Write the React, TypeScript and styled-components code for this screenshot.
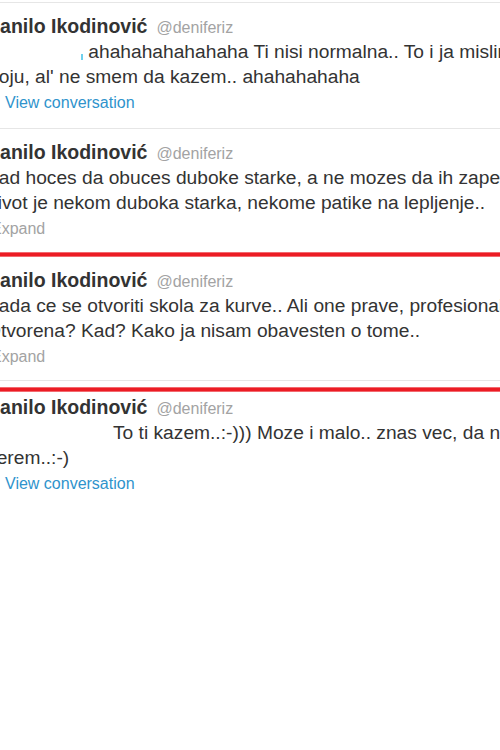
import React from "react";
import styled, { createGlobalStyle } from "styled-components";

type Tweet = {
  lead?: number;
  mark?: boolean;
  lines: string[];
  footer: "conversation" | "expand";
};

const tweets: Tweet[] = [
  {
    lead: 97,
    mark: true,
    lines: [
      " ahahahahahahaha Ti nisi normalna.. To i ja mislim",
      "Koju, al' ne smem da kazem.. ahahahahaha",
    ],
    footer: "conversation",
  },
  {
    lines: [
      "Kad hoces da obuces duboke starke, a ne mozes da ih zapertlas..",
      "Zivot je nekom duboka starka, nekome patike na lepljenje..",
    ],
    footer: "expand",
  },
  {
    lines: [
      "Kada ce se otvoriti skola za kurve.. Ali one prave, profesionalne..",
      "Otvorena? Kad? Kako ja nisam obavesten o tome..",
    ],
    footer: "expand",
  },
  {
    lead: 127,
    lines: [
      "To ti kazem..:-))) Moze i malo.. znas vec, da ne",
      "perem..:-)",
    ],
    footer: "conversation",
  },
];

const App = () => {
  const renderTweet = (t: Tweet, i: number, pad: [number, number], border: boolean) => (
    <TweetItem key={i} $top={pad[0]} $bottom={pad[1]} $border={border}>
      <NameRow>
        <FullName>Danilo Ikodinović</FullName>
        <ScreenName>@deniferiz</ScreenName>
      </NameRow>
      <Text>
        {t.lines.map((line, j) => (
          <Line key={j}>
            {j === 0 && t.lead ? <Lead $w={t.lead}>{t.mark && <Mark />}</Lead> : null}
            {line}
          </Line>
        ))}
      </Text>
      {t.footer === "conversation" ? (
        <Conversation>View conversation</Conversation>
      ) : (
        <Expand>Expand</Expand>
      )}
    </TweetItem>
  );

  return (
    <>
      <GlobalStyle />
      <Page>
        <Stream>
          {renderTweet(tweets[0], 0, [11, 14], true)}
          {renderTweet(tweets[1], 1, [11, 12], false)}
          <RedRule $gap={0} />
          {renderTweet(tweets[2], 2, [11, 12], true)}
          <RedRule $gap={6} />
          {renderTweet(tweets[3], 3, [3, 12], false)}
        </Stream>
      </Page>
    </>
  );
};

const GlobalStyle = createGlobalStyle`
  html, body {
    margin: 0;
    padding: 0;
    background: #ffffff;
    overflow: hidden;
  }
  body {
    font-family: "Liberation Sans", Arial, sans-serif;
  }
`;

const Page = styled.div`
  width: 500px;
  height: 750px;
  overflow: hidden;
  background: #ffffff;
`;

const Stream = styled.div`
  margin-top: 2px;
  margin-left: -14px;
  width: 700px;
  border-top: 1px solid #e6e6e6;
`;

const TweetItem = styled.div<{ $top: number; $bottom: number; $border: boolean }>`
  padding: ${(p) => p.$top}px 0 ${(p) => p.$bottom}px;
  border-bottom: ${(p) => (p.$border ? "1px solid #e6e6e6" : "none")};
`;

const NameRow = styled.div`
  display: flex;
  align-items: baseline;
  height: 25px;
  line-height: 25px;
  white-space: nowrap;
`;

const FullName = styled.strong`
  font-size: 19.5px;
  font-weight: 700;
  color: #333333;
`;

const ScreenName = styled.span`
  margin-left: 9px;
  font-size: 16px;
  color: #a3a3a3;
`;

const Text = styled.div`
  font-size: 19.2px;
  line-height: 25px;
  color: #333333;
`;

const Line = styled.div`
  white-space: pre;
`;

const Lead = styled.span<{ $w: number }>`
  display: inline-block;
  position: relative;
  width: ${(p) => p.$w}px;
  height: 1px;
`;

const Mark = styled.span`
  position: absolute;
  right: 0;
  bottom: -2px;
  width: 2px;
  height: 6px;
  background: #6fd0ec;
`;

const Footer = styled.div`
  margin-top: 3px;
  height: 22px;
  line-height: 22px;
  font-size: 16px;
  white-space: nowrap;
`;

const Conversation = styled(Footer)`
  padding-left: 19px;
  color: #2f93cc;
`;

const Expand = styled(Footer)`
  padding-left: 5px;
  color: #a3a3a3;
`;

const RedRule = styled.div<{ $gap: number }>`
  margin-top: ${(p) => p.$gap}px;
  height: 3px;
  background: #ec1c24;
  border-top: 1px solid #f26a70;
  border-bottom: 1px solid #f26a70;
`;

export default App;
